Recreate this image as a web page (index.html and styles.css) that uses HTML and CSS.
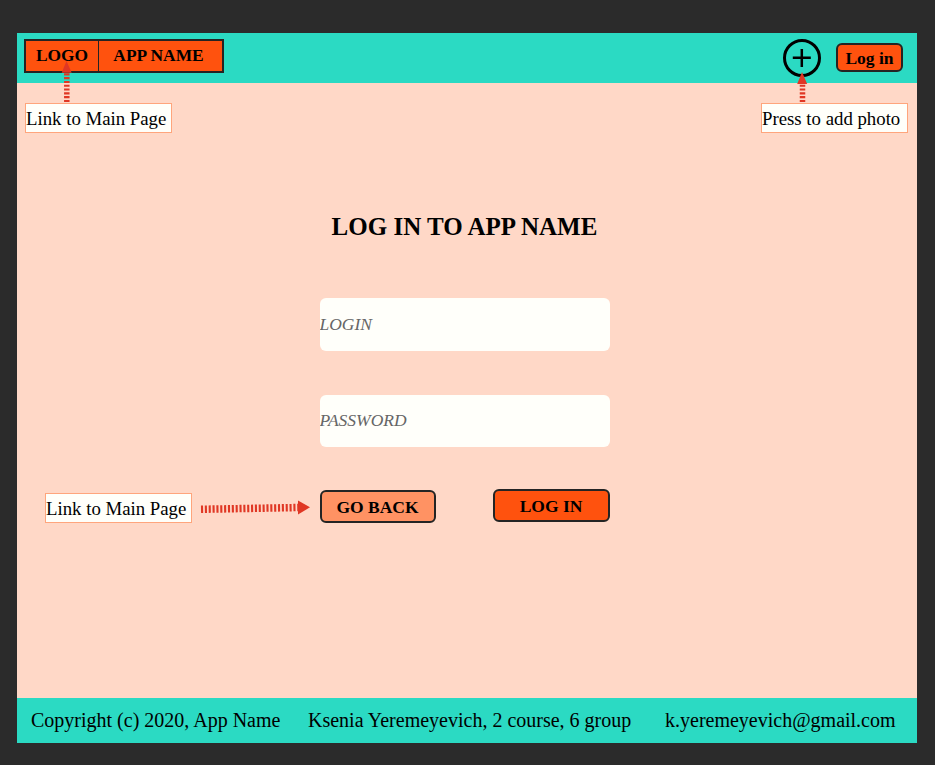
FILE: index.html
```html
<!DOCTYPE html>
<html lang="en">
<head>
<meta charset="utf-8">
<title>Log in to App Name</title>
<link rel="stylesheet" href="styles.css">
</head>
<body>
<div class="page">
  <header class="header">
    <a class="brand"><span class="brand-logo">LOGO</span><span class="brand-name">APP NAME</span></a>
    <div class="actions">
      <svg class="add" width="40" height="40" viewBox="0 0 40 40">
        <circle cx="20" cy="20" r="17.5" fill="none" stroke="#000" stroke-width="3"/>
        <path d="M19.8 11v18M10.8 19.8h18" stroke="#000" stroke-width="2.5"/>
      </svg>
      <button class="btn btn-header">Log in</button>
    </div>
  </header>
  <main class="main">
    <h1 class="title">LOG IN TO APP NAME</h1>
    <form class="form">
      <input class="field" type="text" placeholder="LOGIN">
      <input class="field" type="password" placeholder="PASSWORD">
      <div class="buttons">
        <button class="btn btn-back" type="button">GO BACK</button>
        <button class="btn btn-login" type="button">LOG IN</button>
      </div>
    </form>
  </main>
  <footer class="footer">
    <span class="copyright">Copyright (c) 2020, App Name</span>
    <span class="author">Ksenia Yeremeyevich, 2 course, 6 group</span>
    <span class="email">k.yeremeyevich@gmail.com</span>
  </footer>

  <div class="note note-logo">Link to Main Page</div>
  <div class="note note-add">Press to add photo</div>
  <div class="note note-back">Link to Main Page</div>
  <svg class="arrow arrow-logo" width="12" height="42" viewBox="0 0 12 42">
    <path d="M5.8 41V11" stroke="#e03724" stroke-width="5.5" stroke-dasharray="2.1 1.7"/>
    <path d="M5.5 0L10.7 11.8H0.7z" fill="#e03724"/>
  </svg>
  <svg class="arrow arrow-add" width="12" height="42" viewBox="0 0 12 42">
    <path d="M6.5 41V23" stroke="#e03724" stroke-width="5.5" stroke-dasharray="2.1 1.7"/>
    <path d="M6 11L11.2 23H1.2z" fill="#e03724"/>
  </svg>
  <svg class="arrow arrow-back" width="112" height="18" viewBox="0 0 112 18">
    <path d="M1 10.3L99 8.5" stroke="#e03724" stroke-width="7.5" stroke-dasharray="2.1 1.75"/>
    <path d="M98 1.5L110 8.3L98 15.5z" fill="#e03724"/>
  </svg>
</div>
</body>
</html>
```

FILE: styles.css
```css
* { box-sizing: border-box; }

body {
  margin: 0;
  height: 765px;
  padding: 33px 18px 22px 17px;
  background: #2b2b2b;
  color: #000;
  font-family: "Liberation Serif", "Times New Roman", serif;
  overflow: hidden;
}

.page {
  position: relative;
  display: flex;
  flex-direction: column;
  width: 900px;
  height: 710px;
  background: #ffd8c7;
}

.header {
  display: flex;
  justify-content: space-between;
  align-items: flex-start;
  height: 50px;
  padding: 6px 14px 0 7px;
  background: #2bdac3;
}

.brand {
  display: flex;
  width: 200px;
  height: 34px;
  border: 2px solid #242424;
  background: #ff520e;
  font-size: 17.4px;
  font-weight: bold;
  line-height: 29px;
  text-align: center;
}

.brand-logo {
  width: 73px;
  border-right: 1px solid #242424;
}

.brand-name {
  width: 119px;
}

.actions {
  display: flex;
  gap: 14px;
}

.add {
  margin-top: -1px;
}

.btn {
  border: 2px solid #242424;
  border-radius: 6px;
  padding: 0;
  background: #ff520e;
  color: #000;
  font: bold 17.5px/28px "Liberation Serif", "Times New Roman", serif;
  text-align: center;
}

.btn-header {
  width: 67px;
  height: 29px;
  margin-top: 4px;
  padding-top: 1px;
  line-height: 25px;
}

.main {
  display: flex;
  flex-direction: column;
  align-items: center;
  flex: 1;
  padding-right: 5px;
}

.title {
  margin: 129px 0 56px;
  font-size: 25px;
  line-height: 30px;
}

.form {
  display: flex;
  flex-direction: column;
  width: 290px;
  gap: 44px;
}

.field {
  width: 290px;
  height: 52.5px;
  padding: 0;
  border: 0;
  border-radius: 6px;
  background: #fffffa;
  font: italic 17.5px "Liberation Serif", "Times New Roman", serif;
}

.field::placeholder {
  color: #666;
}

.buttons {
  display: flex;
  justify-content: space-between;
  margin-top: -2px;
}

.btn-back,
.btn-login {
  width: 117px;
  height: 33px;
}

.btn-back {
  width: 116px;
  margin-top: 1px;
  background: #ff9263;
}

.footer {
  display: flex;
  height: 45px;
  padding-left: 14px;
  background: #2bdac3;
  font-size: 20px;
  line-height: 45px;
  white-space: nowrap;
}

.copyright { width: 277px; }
.author { width: 357px; }

.note {
  position: absolute;
  width: 147px;
  height: 30px;
  border: 1px solid #ffa57c;
  background: #fffffa;
  font-size: 18.8px;
  line-height: 29px;
  white-space: nowrap;
}

.note-logo { left: 8px; top: 70px; }
.note-add { left: 744px; top: 70px; }
.note-back { left: 28px; top: 460px; line-height: 30px; }

.arrow { position: absolute; }
.arrow-logo { left: 44px; top: 28px; }
.arrow-add { left: 779px; top: 28px; }
.arrow-back { left: 183px; top: 466px; }
```
